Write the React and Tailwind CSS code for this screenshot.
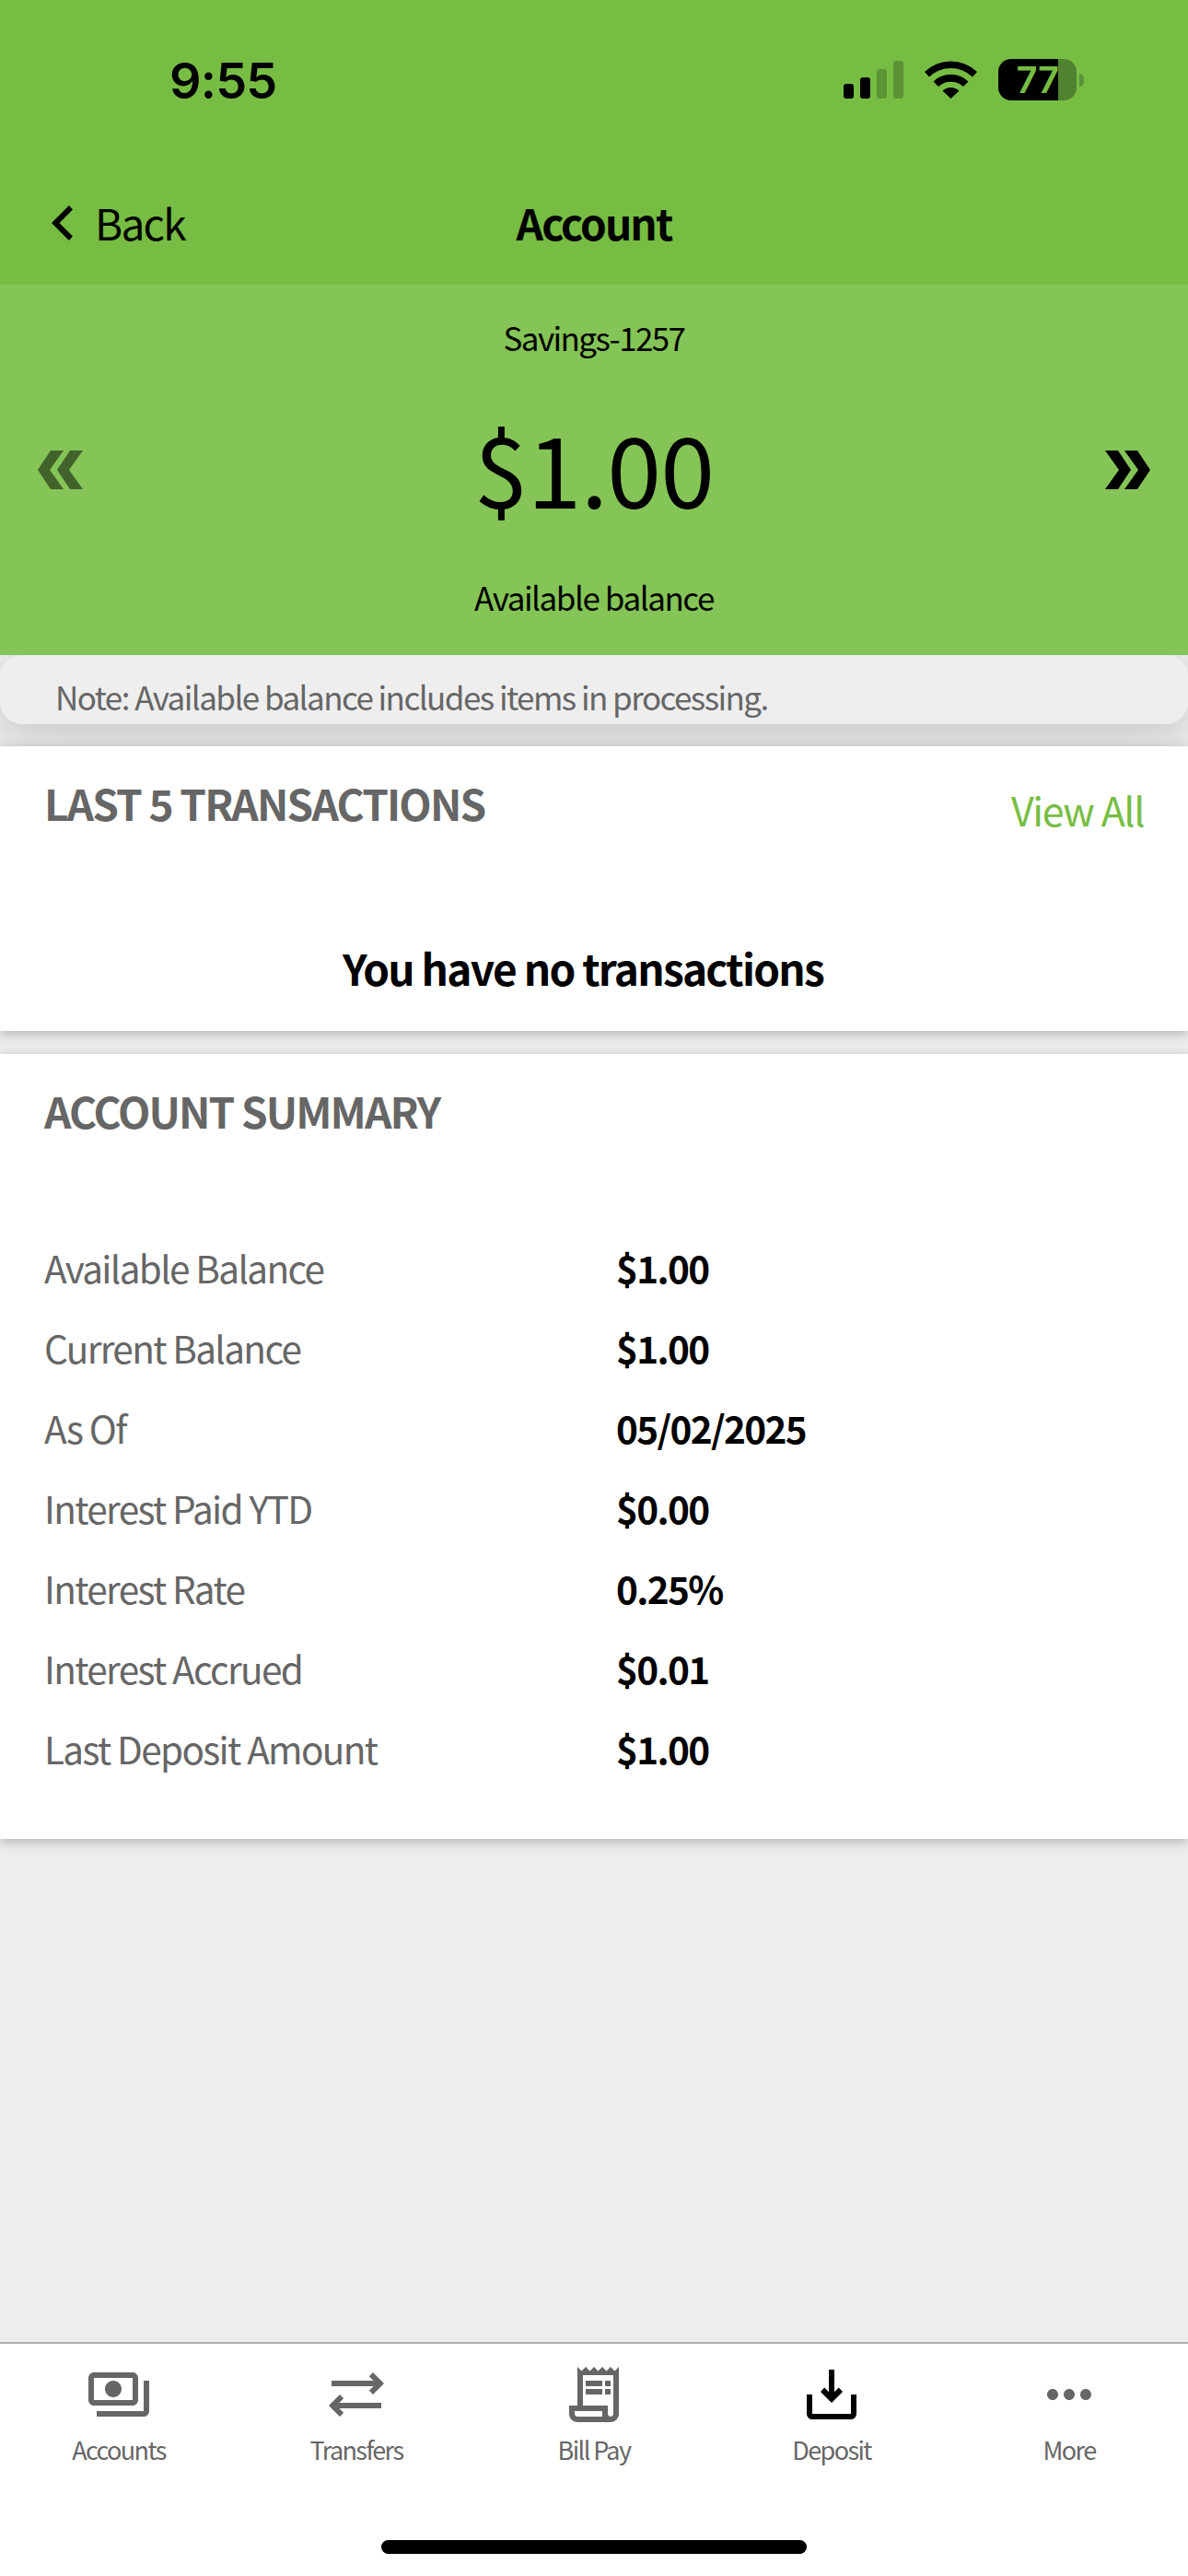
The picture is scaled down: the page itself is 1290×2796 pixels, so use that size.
import { MdMoreHoriz, MdOutlinePayments, MdOutlineReceiptLong } from "react-icons/md";

const summary = [
  { label: "Available Balance", value: "$1.00" },
  { label: "Current Balance", value: "$1.00" },
  { label: "As Of", value: "05/02/2025" },
  { label: "Interest Paid YTD", value: "$0.00" },
  { label: "Interest Rate", value: "0.25%" },
  { label: "Interest Accrued", value: "$0.01" },
  { label: "Last Deposit Amount", value: "$1.00" },
];

function TransferIcon() {
  return (
    <svg viewBox="0 0 24 24" className="size-[72px]" fill="currentColor">
      <path d="M3 7h15.200L16.600 5.400 18 4l4 4-4 4-1.400-1.400L18.200 9H3z" />
      <path d="M21 15H5.800l1.600-1.600L6 12l-4 4 4 4 1.400-1.400L5.800 17H21z" />
    </svg>
  );
}

function DepositIcon() {
  return (
    <svg viewBox="0 0 24 24" className="size-[72px] text-black" fill="currentColor">
      <path d="M11 3h2v8.100l1.600-1.600L16 11l-4 4-4-4 1.400-1.500L11 11.100z" />
      <path d="M3 12h2v7h14v-7h2v7c0 1.100-.9 2-2 2H5c-1.100 0-2-.9-2-2z" />
    </svg>
  );
}

function DoubleChevron({ className }) {
  return (
    <svg viewBox="0 0 49 42" className={"h-[42px] w-[49px] " + className} fill="currentColor">
      <path d="M0 21 14 0h14L13 21l15 21H14z" />
      <path d="M21 21 35 0h14L34 21l15 21H35z" />
    </svg>
  );
}

function StatusBar() {
  return (
    <div className="flex h-[180px] items-start justify-between">
      <span className="mt-[56px] ml-[184px] font-[Inter] text-[54px] leading-[64px] font-semibold tracking-[-0.8px]">
        9:55
      </span>
      <div className="mt-[64px] mr-[113px] flex items-start">
        <svg viewBox="0 0 66 42" className="mt-[2px] h-[42px] w-[66px]">
          <rect x="0" y="25" width="11" height="16" rx="3" />
          <rect x="18" y="18" width="11" height="23" rx="3" />
          <rect x="36" y="9" width="11" height="32" rx="3" opacity=".22" />
          <rect x="54" y="0" width="11" height="41" rx="3" opacity=".22" />
        </svg>
        <svg viewBox="0 0 57 42" className="ml-[22px] mt-px h-[42px] w-[57px]">
          <path d="M0 13a41 41 0 0 1 57 0l-5 5.500a34 34 0 0 0-47 0z" />
          <path d="M9.500 23.500a27 27 0 0 1 38 0l-5.500 5.500a20 20 0 0 0-27 0z" />
          <path d="M19.500 33.500a13 13 0 0 1 18 0L28.500 42z" />
        </svg>
        <div className="ml-[23px] flex items-center gap-[3px]">
          <div className="flex h-[45px] w-[85px] items-center justify-center rounded-[14px] bg-linear-to-r from-black from-[76.5%] to-[#508230] to-[76.5%] text-[#77bd43]">
            <span className="font-[Inter] text-[40px] leading-none font-semibold tracking-[-0.5px]">77</span>
          </div>
          <div className="h-[14px] w-[5px] rounded-r-full bg-[#5a9336]" />
        </div>
      </div>
    </div>
  );
}

function Tab({ icon, label }) {
  return (
    <div className="flex w-1/5 flex-col items-center pt-[19px]">
      {icon}
      <span className="mt-[4px] text-[27px] leading-[40px] tracking-[-1.6px]">{label}</span>
    </div>
  );
}

export default function App() {
  return (
    <div className="flex h-[2796px] w-[1290px] flex-col overflow-hidden bg-[#ededed] font-['Noto_Sans_CJK_SC',sans-serif] text-black">
      {/* Header */}
      <header className="h-[309px] bg-[#77bd43]">
        <StatusBar />
        <div className="grid grid-cols-3 items-center">
          <div className="flex items-center pl-[56px]">
            <svg viewBox="0 0 23 38" className="h-[38px] w-[23px]">
              <path d="M23 4.500 19 0 0 19l19 19 4-4.500L8.500 19z" />
            </svg>
            <span className="-mt-[2px] ml-[24px] text-[46px] leading-[124px] tracking-[-1.8px]">Back</span>
          </div>
          <h1 className="text-center text-[46px] leading-[123px] font-bold tracking-[-1.9px]">Account</h1>
        </div>
      </header>

      {/* Balance */}
      <section className="relative z-10 flex h-[402px] items-center justify-between bg-[#85c456] px-[41px]">
        <DoubleChevron className="text-[#42622b]" />
        <div className="-mt-[6px] flex flex-col items-center">
          <p className="text-[35px] leading-[60px] tracking-[-1.6px]">Savings-1257</p>
          <p className="mt-[33px] mb-[35px] text-[106px] leading-[154px] tracking-[-0.8px]">$1.00</p>
          <p className="text-[35px] leading-[60px] tracking-[-1.45px]">Available balance</p>
        </div>
        <DoubleChevron className="rotate-180" />
      </section>

      {/* Note */}
      <p className="h-[75px] rounded-[24px] bg-[#eee] pl-[60px] text-[35px] leading-[90px] tracking-[-1.55px] text-[#666] shadow-[0_12px_48px_rgba(0,0,0,0.17)]">
        Note: Available balance includes items in processing.
      </p>

      {/* Transactions */}
      <section className="mt-[24px] h-[309px] bg-white px-[48px] shadow-[0_3px_12px_rgba(0,0,0,0.25)]">
        <div className="flex h-[130px] justify-between">
          <h2 className="text-[46px] leading-[123px] font-bold tracking-[-1.85px] text-[#666]">
            LAST 5 TRANSACTIONS
          </h2>
          <a href="#" className="text-[43px] leading-[137px] tracking-[-1.4px] text-[#77bd43]">
            View All
          </a>
        </div>
        <p className="mr-[24px] pt-[75px] text-center text-[46px] leading-[70px] font-bold tracking-[-1.75px]">
          You have no transactions
        </p>
      </section>

      {/* Summary */}
      <section className="mt-[25px] h-[852px] bg-white px-[48px] shadow-[0_3px_12px_rgba(0,0,0,0.25)]">
        <h2 className="text-[46px] leading-[123px] font-bold tracking-[-1.9px] text-[#666]">
          ACCOUNT SUMMARY
        </h2>
        <dl className="mt-[66px]">
          {summary.map((row) => (
            <div key={row.label} className="flex h-[87px] items-center text-[40.5px] tracking-[-1.65px]">
              <dt className="w-[621px] text-[#666]">{row.label}</dt>
              <dd className="font-bold">{row.value}</dd>
            </div>
          ))}
        </dl>
      </section>

      {/* Bottom tabs */}
      <nav className="mt-auto flex h-[254px] shrink-0 flex-col border-t-2 border-[#b0b0b0] bg-white text-[#666]">
        <div className="flex">
          <Tab icon={<MdOutlinePayments className="size-[72px]" />} label="Accounts" />
          <Tab icon={<TransferIcon />} label="Transfers" />
          <Tab icon={<MdOutlineReceiptLong className="size-[72px]" />} label="Bill Pay" />
          <Tab icon={<DepositIcon />} label="Deposit" />
          <Tab icon={<MdMoreHoriz className="size-[72px]" />} label="More" />
        </div>
        <div className="mx-auto mt-auto mb-[24px] h-[15px] w-[462px] rounded-full bg-black" />
      </nav>
    </div>
  );
}
